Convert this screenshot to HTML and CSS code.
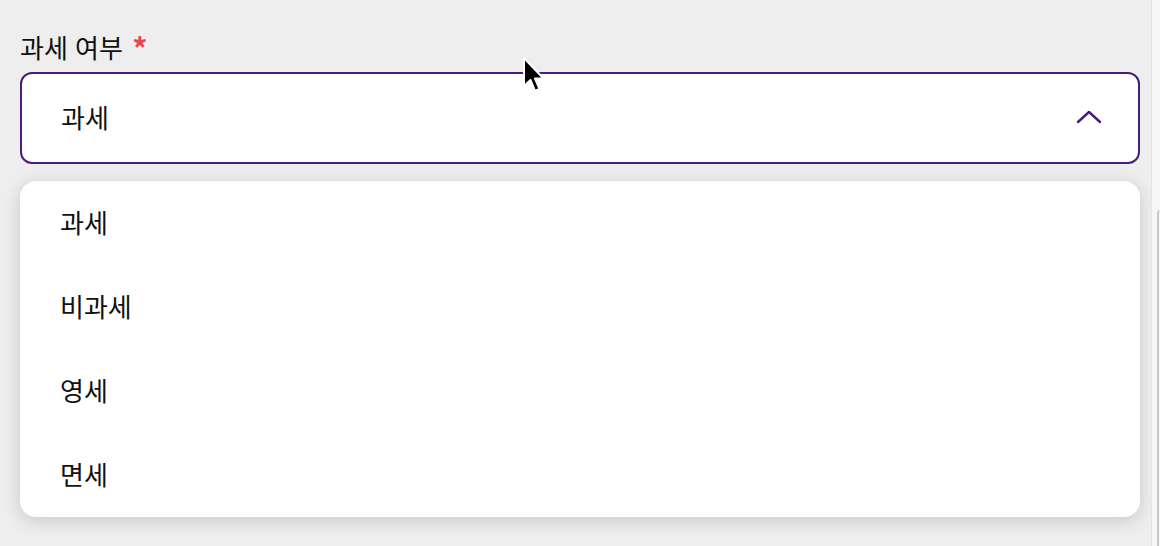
FILE: index.html
```html
<!DOCTYPE html>
<html lang="ko">
<head>
    <meta charset="UTF-8">
    <meta name="viewport" content="width=device-width, initial-scale=1.0">
    <title>과세 여부</title>
    <link rel="stylesheet" href="styles.css">
</head>
<body>
    <div class="field">
        <label class="field-label">과세 여부 <span class="required">*</span></label>
        <div class="select">
            <span class="select-value">과세</span>
            <svg class="chevron" width="26" height="14" viewBox="0 0 26 14">
                <path d="M2 12 L13 2 L24 12" fill="none" stroke="#4b1c7f" stroke-width="2.4" stroke-linecap="round" stroke-linejoin="round"/>
            </svg>
        </div>
        <ul class="menu">
            <li class="menu-item">과세</li>
            <li class="menu-item">비과세</li>
            <li class="menu-item">영세</li>
            <li class="menu-item">면세</li>
        </ul>
    </div>

    <div class="side-strip">
        <div class="side-track"></div>
    </div>

    <svg class="cursor" width="24" height="38" viewBox="0 0 24 38">
        <path d="M2 2 L2 30 L8.5 24 L13 35 L17.5 33 L13 22.5 L21.5 22.5 Z" fill="#000" stroke="#fff" stroke-width="2" stroke-linejoin="round"/>
    </svg>
</body>
</html>
```

FILE: styles.css
```css
body {
    margin: 0;
    padding: 0;
    background-color: #eeeeee;
    font-family: "Noto Sans CJK KR", "Noto Sans", sans-serif;
    color: #111;
    width: 1160px;
    height: 546px;
    overflow: hidden;
    position: relative;
}

.field {
    padding: 31px 20px 0 20px;
    display: flex;
    flex-direction: column;
}

.field-label {
    font-size: 26px;
    line-height: 32px;
    margin-bottom: 9px;
}

.required {
    color: #e8474c;
    font-weight: bold;
    font-size: 30px;
    line-height: 0;
    margin-left: 2px;
    vertical-align: -2px;
}

.select {
    box-sizing: border-box;
    height: 92px;
    border: 2px solid #4b1c7f;
    border-radius: 12px;
    background-color: #fff;
    display: flex;
    align-items: center;
    justify-content: space-between;
    padding: 0 36px 0 39px;
}

.select-value {
    font-size: 26px;
    line-height: 32px;
    margin-top: -2px;
}

.chevron {
    display: block;
    margin-top: -2px;
}

.menu {
    list-style: none;
    margin: 17px 0 0 0;
    padding: 0;
    background-color: #fff;
    border-radius: 16px;
    box-shadow: 0 4px 18px rgba(0, 0, 0, 0.16);
}

.menu-item {
    height: 84px;
    display: flex;
    align-items: center;
    padding-left: 40px;
    font-size: 26px;
    padding-bottom: 3px;
    box-sizing: border-box;
}

.side-strip {
    position: absolute;
    top: 0;
    right: 0;
    width: 8px;
    height: 546px;
    background-color: #f7f7f7;
    border-left: 1px solid #e4e4e4;
}

.side-track {
    margin-top: 210px;
    margin-left: 5px;
    height: 336px;
    border-left: 2px solid #c8c8c8;
    border-top-left-radius: 3px;
}

.cursor {
    position: absolute;
    left: 522px;
    top: 56px;
}
```
